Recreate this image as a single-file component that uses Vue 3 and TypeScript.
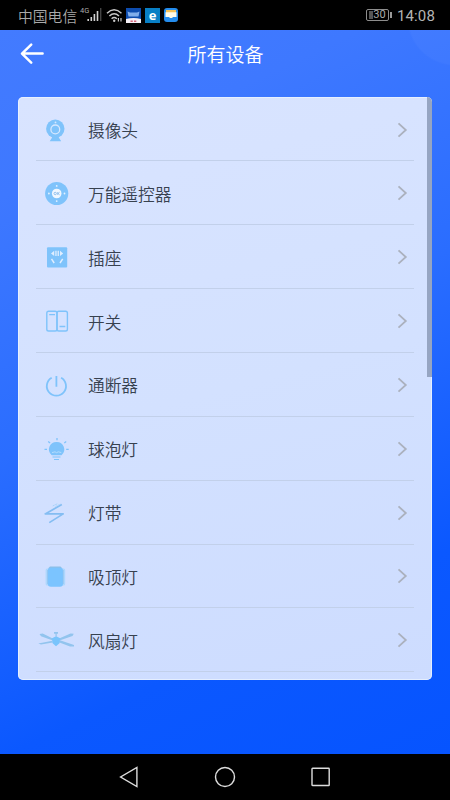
<script setup lang="ts" name="DeviceList">
import { ref } from 'vue'

type IconName = 'camera' | 'remote' | 'socket' | 'switch' | 'power' | 'bulb' | 'strip' | 'ceiling' | 'fan'

interface Device {
  icon: IconName
  label: string
}

// 设备分类
const devices: Device[] = [
  { icon: 'camera', label: '摄像头' },
  { icon: 'remote', label: '万能遥控器' },
  { icon: 'socket', label: '插座' },
  { icon: 'switch', label: '开关' },
  { icon: 'power', label: '通断器' },
  { icon: 'bulb', label: '球泡灯' },
  { icon: 'strip', label: '灯带' },
  { icon: 'ceiling', label: '吸顶灯' },
  { icon: 'fan', label: '风扇灯' },
]

const selected = ref<IconName | null>(null)

function selectDevice(device: Device) {
  selected.value = device.icon
}
</script>

<template>
  <div class="phone">
    <!-- 系统状态栏 -->
    <header class="status">
      <span class="status__carrier">中国电信</span>
      <span class="status__net">4G</span>
      <svg class="status__signal" width="15" height="14" viewBox="0 0 15 14">
        <path d="M1.2 11v2M4.3 9v4M7.4 6v7M10.5 3v10" stroke="#d0d0d0" stroke-width="1.6" />
        <path d="M13.7 0v13" stroke="#444" stroke-width="1.4" />
      </svg>
      <svg class="status__wifi" width="17" height="15" viewBox="0 0 17 15" fill="none" stroke="#c8c8c8" stroke-width="1.5">
        <path d="M1 5.2Q8 -1.6 15.5 5.2M3.4 8Q8.2 3.6 13 8M5.6 10.7Q8.2 8.3 10.8 10.7" />
        <circle cx="8.2" cy="12.7" r="1.2" fill="#c8c8c8" stroke="none" />
        <path d="M12.4 10v3.4M15 10v3.4" stroke-width="1.2" />
      </svg>
      <svg class="status__app" width="15" height="15" viewBox="0 0 15 15">
        <path fill="#0d4cae" d="M0 0h15v15H0z" />
        <path fill="#81aeea" d="M1.5 3.5l2.5 1h7l2.5-1-1 5h-10z" />
        <path fill="#f4eff6" d="M0 11q7.5-2 15 0v4H0z" />
        <path stroke="#d66579" stroke-width="1.5" d="M4.5 13.2h2.3M8 13.2h2.3" />
      </svg>
      <span class="status__app status__app--e">e</span>
      <svg class="status__app" width="14" height="14" viewBox="0 0 14 14">
        <rect width="14" height="14" rx="3" fill="#248ced" />
        <path fill="#f4c25a" d="M2 2h10v4H2z" />
        <path fill="#fffbe9" d="M1.5 4.3h11v4.8H9L8 10H6L5 9.1H1.5z" />
      </svg>
      <span class="status__space" />
      <span class="battery"><i class="battery__level" />30</span>
      <i class="battery__tip" />
      <span class="status__time">14:08</span>
    </header>

    <main class="page">
      <!-- 标题栏 -->
      <div class="navbar">
        <button type="button" class="navbar__back" aria-label="返回">
          <svg width="24" height="22" viewBox="0 0 24 22" fill="none" stroke="#fff" stroke-width="2.5" stroke-linecap="round" stroke-linejoin="round">
            <path d="M11.2 1.6L2 10.6l9.2 9M2.2 10.6h20.4" />
          </svg>
        </button>
        <h1 class="navbar__title">所有设备</h1>
      </div>

      <!-- 设备列表 -->
      <div class="card">
        <ul class="list">
          <li
            v-for="device in devices"
            :key="device.icon"
            class="row"
            @click="selectDevice(device)"
          >
            <svg class="row__icon" width="40" height="32" viewBox="0 0 40 32" fill="none">
              <g v-if="device.icon === 'camera'">
                <path fill="#7fc3fb" d="M15.5 20h7.8l-.5 3.5 2.4 3.7H13.7l2.4-3.7z" />
                <circle cx="19.3" cy="14.8" r="9.2" fill="#7fc3fb" />
                <circle cx="19.3" cy="15.4" r="4.4" stroke="#d5e7ff" stroke-width="1.3" />
                <circle cx="19.5" cy="8.4" r=".9" fill="#d5e7ff" />
              </g>
              <g v-else-if="device.icon === 'remote'">
                <circle cx="20.7" cy="16.5" r="11.6" fill="#7fc3fb" />
                <circle cx="20.7" cy="16.5" r="4.8" fill="#f0f7ff" />
                <circle cx="19.2" cy="16.5" r="1.2" stroke="#7fb5e8" stroke-width=".8" />
                <path d="M21.7 15.1v2.8M23.6 15.2l-1.6 1.3 1.6 1.3" stroke="#7fb5e8" stroke-width=".8" />
                <g fill="#e4f1ff">
                  <circle cx="20.7" cy="8.9" r=".9" />
                  <circle cx="20.7" cy="24.1" r=".9" />
                  <circle cx="12.9" cy="16.5" r=".9" />
                  <circle cx="28.5" cy="16.5" r=".9" />
                </g>
              </g>
              <g v-else-if="device.icon === 'socket'">
                <rect x="11" y="6.2" width="20.2" height="20.2" rx="1" fill="#7fc3fb" />
                <path fill="#e0eeff" d="M15 12.4l3.2-2.6v5.2zM27.2 12.4L24 9.8V15zM19.3 9.8h1.3V15h-1.3zM21.6 9.8h1.3V15h-1.3z" />
                <path stroke="#e0eeff" stroke-width="1.5" d="M15.5 17.8l2.7 4.2M26.7 17.8L24 22" />
              </g>
              <g v-else-if="device.icon === 'switch'" stroke="#7fc3fb" stroke-width="1.4">
                <rect x="10.8" y="6.2" width="10.2" height="19.8" rx="1.8" />
                <rect x="21" y="6.2" width="10.4" height="19.8" rx="1.8" />
                <path d="M13.2 9.6h5.8M23.5 21.5h5.8" />
              </g>
              <g v-else-if="device.icon === 'power'" stroke="#7fc3fb" stroke-width="1.8">
                <path d="M15.7 8.7a9.6 9.6 0 1 0 9.4 0M20.4 7v10.8" />
              </g>
              <g v-else-if="device.icon === 'bulb'">
                <path fill="#7fc3fb" d="M20.5 8.9a7.5 7.5 0 0 0-4.8 13.3h9.8a7.5 7.5 0 0 0-5-13.3z" />
                <path stroke="#b9defd" stroke-width=".9" d="M16 19.6l3-.8 1.5.9 1.8-.9 3 .8" />
                <path stroke="#7fc3fb" stroke-width="1.1" d="M16.5 24h8M18 26.5h5" />
                <path stroke="#7fc3fb" stroke-width="1.3" d="M21 5v2.2M12.2 8.4l1.9 1.6M30.2 8.4L28.3 10M8.5 16.4H11M30.2 16.4h2.5" />
              </g>
              <g v-else-if="device.icon === 'strip'" stroke="#84bdf2">
                <path stroke-width="1.7" stroke-linejoin="round" d="M25.8 7.6L9.2 16.9h18L13.3 25.6" />
                <path stroke="#a9d3fa" stroke-width="1" stroke-dasharray="2 .6" d="M16.8 8.9l5-2.3M19.5 9.6l5-2.6" />
              </g>
              <g v-else-if="device.icon === 'ceiling'">
                <rect x="9.6" y="8.5" width="19.6" height="17" rx="1.5" fill="#aed7fd" />
                <path fill="#8bbfe8" d="M14 6.6h10.5l2 2H12z" />
                <rect x="11.8" y="7.8" width="15.2" height="19" rx="3" fill="#7bc4ff" />
                <path stroke="#8fc2ee" stroke-width=".8" d="M11.6 10v14M27.2 10v14" />
              </g>
              <g v-else>
                <path fill="#92c4ee" d="M3.5 10l3.2-.5 11.1 5.4-1 1.6L5 12.2zM37.8 9.8l-3.3-.4-12 5.3 1 1.9 13-4.6zM2.3 19.4l14-2.6.6 1.8L5 20.6zM38 20.9l-14-4.6-1.2 2L34 22.6l4-.2z" />
                <path fill="#92c4ee" d="M18 8.1h4v1.7h-1.3v3.5h-1.2V9.8H18z" />
                <path fill="#79c4fc" d="M16 14.2l3-1.4h2.2l3 1.4-.7 5-3.5 3-3.4-3z" />
              </g>
            </svg>
            <span class="row__label">{{ device.label }}</span>
            <svg class="row__arrow" width="11" height="16" viewBox="0 0 11 16" fill="none">
              <path d="M1.5 1.4L8.8 8l-7.3 6.6" stroke="#abb1be" stroke-width="1.8" />
            </svg>
          </li>
        </ul>
        <i class="card__thumb" />
      </div>
    </main>

    <!-- 系统导航键 -->
    <footer class="keys">
      <svg width="20" height="22" viewBox="0 0 20 22"><path d="M17.9 1.5v19L1.6 11z" /></svg>
      <svg width="22" height="22" viewBox="0 0 22 22"><circle cx="11" cy="11" r="9.5" /></svg>
      <svg width="20" height="20" viewBox="0 0 20 20"><rect x="1" y="1.3" width="17.2" height="17.2" rx=".6" /></svg>
    </footer>
  </div>
</template>

<style>
body {
  margin: 0;
  background: #000;
}
</style>

<style scoped>
.phone {
  width: 450px;
  height: 800px;
  display: flex;
  flex-direction: column;
  overflow: hidden;
  background: #000;
  font-family: 'Noto Sans CJK SC', sans-serif;
}

/* 状态栏 */
.status {
  flex: none;
  height: 30px;
  box-sizing: border-box;
  padding: 0 15px 0 18px;
  display: flex;
  align-items: center;
  color: #aaa;
}

.status__carrier {
  width: 60px;
  padding-top: 1px;
  font-size: 14.8px;
  font-weight: 350;
  line-height: 30px;
  white-space: nowrap;
}

.status__net {
  width: 7px;
  margin: 0 0 8px 2px;
  font: 7.5px/10px Roboto, sans-serif;
  white-space: nowrap;
}

.status__signal {
  margin-left: 0;
}

.status__wifi {
  margin-left: 4px;
}

.status__app {
  flex: none;
  margin-left: 3px;
}

.status__app + .status__app {
  margin-left: 4px;
}

.status__app--e {
  width: 15px;
  height: 15px;
  background: #087fc5;
  color: #fff;
  font: bold 13px/15px 'Open Sans', sans-serif;
  text-align: center;
}

.status__space {
  flex: 1;
}

.battery {
  width: 21px;
  height: 10px;
  display: flex;
  align-items: center;
  justify-content: center;
  border: 1px solid #8d8d8d;
  border-radius: 2px;
  font: 11px/10px Roboto, sans-serif;
}

.battery__level {
  width: 4px;
  height: 8px;
  background: #555;
}

.battery__tip {
  width: 2px;
  height: 6px;
  margin: 0 5px 0 1px;
  background: #999;
}

.status__time {
  padding-top: 1px;
  font: 15px/30px Roboto, sans-serif;
  letter-spacing: 0.15px;
  color: #b4b4b4;
}

/* 页面 */
.page {
  height: 724px;
  box-sizing: border-box;
  padding: 0 18px;
  background:
    radial-gradient(circle at 455px -12px, rgba(255, 255, 255, 0.03) 46px, transparent 48px),
    linear-gradient(155deg, #437bff 0%, #3e78ff 18%, #2a6dff 46%, #0b58ff 78%, #0654ff 100%);
}

.navbar {
  height: 67px;
  box-sizing: border-box;
  padding-bottom: 19px;
  display: flex;
  align-items: center;
}

.navbar__back {
  width: 30px;
  height: 24px;
  padding: 0 0 0 2px;
  display: flex;
  align-items: center;
  border: none;
  background: transparent;
}

.navbar__title {
  flex: 1;
  margin: 0 29px 0 0;
  color: #fff;
  font-size: 19px;
  font-weight: 350;
  line-height: 28px;
  text-align: center;
}

/* 列表卡片 */
.card {
  position: relative;
  height: 583px;
  box-sizing: border-box;
  overflow: hidden;
  border-radius: 5px;
  background: linear-gradient(165deg, #d9e4ff, #d3e1ff 50%, #cddcff);
  box-shadow: inset 0 0 0 1px rgba(240, 247, 255, 0.65);
}

.card__thumb {
  position: absolute;
  top: 0;
  right: 0;
  width: 5px;
  height: 280px;
  background: #96a5c2;
}

.list {
  margin: 0;
  padding: 0.6px 18px 0;
  list-style: none;
}

.row {
  height: 63.85px;
  box-sizing: border-box;
  padding-top: 1px;
  display: flex;
  align-items: center;
  border-bottom: 1px solid #c2d0ea;
}

.row__icon {
  flex: none;
}

.row__label {
  flex: 1;
  margin: 1px 0 0 12px;
  color: #37414f;
  font-size: 16.7px;
  font-weight: 350;
  line-height: 24px;
}

.row__arrow {
  margin-right: 6px;
}

/* 导航键 */
.keys {
  height: 46px;
  display: flex;
  align-items: center;
  justify-content: center;
  gap: 75px;
}

.keys svg {
  fill: none;
  stroke: #ddd;
  stroke-width: 1.4;
}
</style>
